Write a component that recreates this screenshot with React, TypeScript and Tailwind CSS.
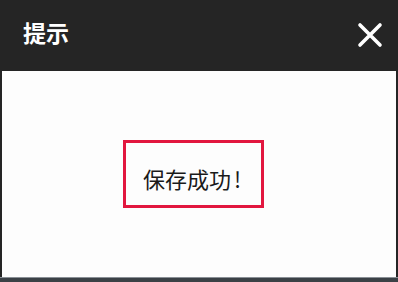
import React from 'react';

const App: React.FC = () => {
  return (
    <div
      className="w-[398px] h-[282px] flex flex-col bg-[#252525] overflow-hidden"
      style={{ fontFamily: '"Noto Sans CJK SC", "Noto Sans", sans-serif' }}
    >
      {/* Header */}
      <div className="h-[71px] flex items-center justify-between pl-[23px] pr-[14px] pb-[6px]">
        <span className="text-white text-[23px] font-bold leading-none">提示</span>
        <svg width="26" height="26" viewBox="0 0 26 26" className="mr-[1px] mt-[4px]">
          <path d="M3 3 L23 23 M23 3 L3 23" stroke="#ffffff" strokeWidth="3.6" strokeLinecap="round" />
        </svg>
      </div>

      {/* Body */}
      <div className="flex-1 flex flex-col px-[2px]">
        <div className="flex-1 bg-[#fdfdfd] flex items-start pl-[121px] pt-[69px]">
          <div className="w-[141px] h-[68px] border-[3px] border-[#e2173f] flex items-center pl-[17px] pt-[7px]">
            <span className="text-[#1a1a1a] text-[22px] leading-none">
              保存成功<span className="ml-[3px]">!</span>
            </span>
          </div>
        </div>
        <div className="h-[5px] bg-[#3b4146] border-t border-[#8a9096] -mx-[2px]" />
      </div>
    </div>
  );
};

export default App;
